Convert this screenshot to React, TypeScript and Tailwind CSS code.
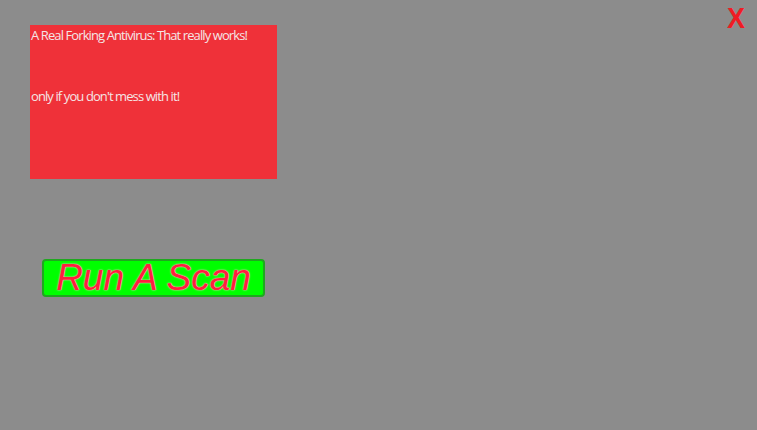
export default function App() {
  return (
    <div className="w-[757px] h-[430px] bg-[#8c8c8c] relative overflow-hidden" style={{ fontFamily: '"Open Sans", sans-serif' }}>
      <div className="absolute top-[3px] right-[11px] text-[#f01c24] text-[30px] font-bold leading-none scale-x-90" style={{ fontFamily: '"Liberation Sans", sans-serif' }}>X</div>
      <div className="pt-[25px] pl-[30px]">
        <div className="w-[247px] h-[154px] bg-[#ef3139] text-[#f4e6e6] text-[13px] tracking-[-0.9px] leading-[15px] pl-[1px] pt-[3px]">
          <p>A Real Forking Antivirus: That really works!</p>
          <p className="mt-[46px]">only if you don't mess with it!</p>
        </div>
        <div className="mt-[80px] ml-[12px]">
          <button
            className="w-[223px] h-[38px] bg-[#00ff00] border-2 border-[#1fa81f] rounded-[4px] text-[#ff1f3d] italic text-[37px] leading-none flex items-center justify-center pb-[1px]"
            style={{ fontFamily: '"Liberation Sans", sans-serif', textShadow: '0 0 2px #ffb0c0, 0 0 1px #ffd0d8' }}
          >
            Run A Scan
          </button>
        </div>
      </div>
    </div>
  );
}
